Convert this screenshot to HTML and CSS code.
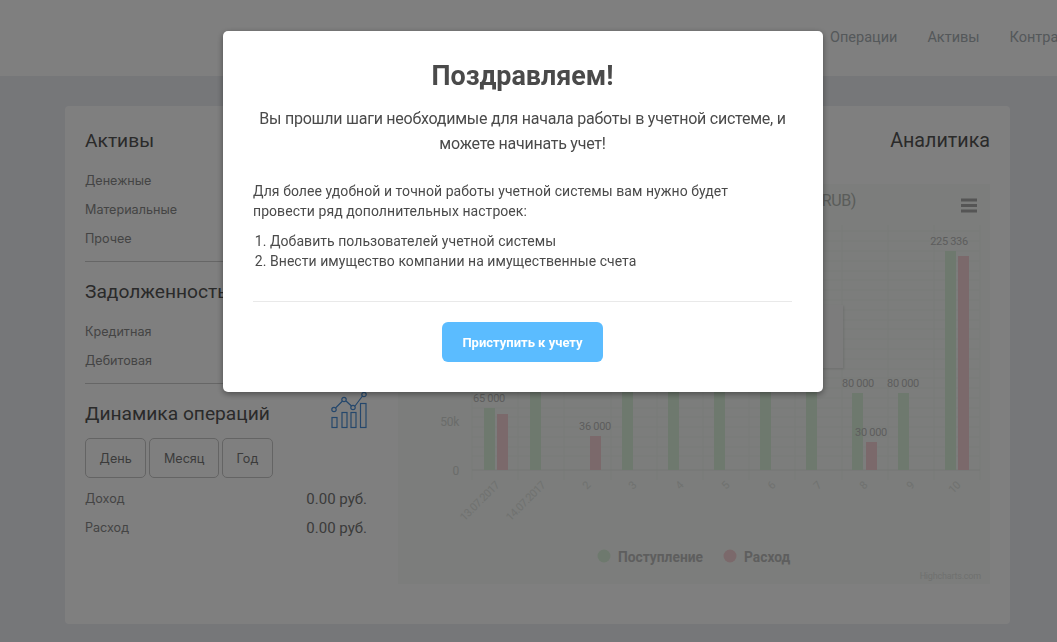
FILE: index.html
```html
<!DOCTYPE html>
<html lang="en">
<head>
  <meta charset="UTF-8" />
  <title>Учет</title>
  <link rel="stylesheet" href="styles.css">
</head>
<body>
  <header class="topbar">
    <nav class="nav">
      <a>Операции</a>
      <a>Активы</a>
      <a>Контра</a>
    </nav>
  </header>

  <main class="card">
    <section class="left">
      <h3>Активы</h3>
      <div class="row"><span>Денежные</span></div>
      <div class="row"><span>Материальные</span></div>
      <div class="row"><span>Прочее</span></div>
      <hr>
      <h3>Задолженность</h3>
      <div class="row"><span>Кредитная</span></div>
      <div class="row"><span>Дебитовая</span></div>
      <hr>
      <div class="dyn-head">
        <h3>Динамика операций</h3>
        <svg class="dyn-icon" width="38" height="38" viewBox="0 0 38 38" fill="none" stroke="#4a8fd8" stroke-width="1.2">
          <rect x="3" y="26.500" width="5" height="10"/>
          <rect x="13" y="21.500" width="5" height="15"/>
          <rect x="22" y="21.500" width="5" height="15"/>
          <rect x="31.500" y="12.500" width="5.500" height="24"/>
          <path d="M6.500 17 L13.500 10 M17 10 L22.500 15 M26 15 L33.500 5"/>
          <circle cx="5" cy="18.500" r="2.200"/>
          <circle cx="15" cy="8.500" r="2.200"/>
          <circle cx="24" cy="16.500" r="2.200"/>
          <circle cx="35" cy="3.500" r="2.200"/>
        </svg>
      </div>
      <div class="periods">
        <button>День</button>
        <button>Месяц</button>
        <button>Год</button>
      </div>
      <div class="row"><span>Доход</span><b>0.00 руб.</b></div>
      <div class="row"><span>Расход</span><b>0.00 руб.</b></div>
    </section>

    <section class="right">
      <h3>Аналитика</h3>
      <div class="chart">
        <svg width="592" height="400" viewBox="398 184 592 400">
          <path class="grid" d="M472 231H980M472 241H980M472 251H980M472 261H980M472 271H980M472 280H980M472 290H980M472 300H980M472 310H980M472 320H980M472 329H980M472 339H980M472 349H980M472 359H980M472 369H980M472 378H980M472 388H980M472 398H980M472 408H980M472 417H980M472 427H980M472 437H980M472 447H980M472 456H980"/>
          <path class="grid" d="M472 225V480M518 225V480M564 225V480M611 225V480M657 225V480M703 225V480M749 225V480M795 225V480M842 225V480M888 225V480M934 225V480M980 225V480"/>
          <path class="axis" d="M472 470H980"/>

          <rect class="in" x="484" y="408" width="11" height="62"/>
          <rect class="out" x="497" y="414" width="11" height="56"/>
          <rect class="in" x="530" y="380" width="11" height="90"/>
          <rect class="out" x="590" y="436" width="11" height="34"/>
          <rect class="in" x="622" y="380" width="11" height="90"/>
          <rect class="in" x="668" y="380" width="11" height="90"/>
          <rect class="in" x="714" y="380" width="11" height="90"/>
          <rect class="in" x="760" y="380" width="11" height="90"/>
          <rect class="in" x="806" y="380" width="11" height="90"/>
          <rect class="in" x="852" y="393" width="11" height="77"/>
          <rect class="out" x="866" y="442" width="11" height="28"/>
          <rect class="in" x="898" y="393" width="11" height="77"/>
          <rect class="in" x="945" y="251" width="11" height="219"/>
          <rect class="out" x="958" y="256" width="11" height="214"/>

          <rect class="tip" x="780" y="305" width="63" height="63"/>

          <text class="title" x="856" y="206" text-anchor="end">(RUB)</text>
          <path class="burger" d="M961 200H977M961 205.500H977M961 211H977"/>

          <g class="val" text-anchor="middle">
            <text x="489" y="402">65 000</text>
            <text x="595" y="430">36 000</text>
            <text x="858" y="387">80 000</text>
            <text x="871" y="436">30 000</text>
            <text x="903" y="387">80 000</text>
            <text x="949" y="245">225 336</text>
          </g>
          <g class="ylab" text-anchor="end">
            <text x="459" y="426">50k</text>
            <text x="459" y="475">0</text>
          </g>
          <g class="xlab" text-anchor="end">
            <text transform="translate(500 486) rotate(-45)">13.07.2017</text>
            <text transform="translate(546 486) rotate(-45)">14.07.2017</text>
            <text transform="translate(591 486) rotate(-45)">2</text>
            <text transform="translate(637 486) rotate(-45)">3</text>
            <text transform="translate(684 486) rotate(-45)">4</text>
            <text transform="translate(730 486) rotate(-45)">5</text>
            <text transform="translate(776 486) rotate(-45)">6</text>
            <text transform="translate(822 486) rotate(-45)">7</text>
            <text transform="translate(868 486) rotate(-45)">8</text>
            <text transform="translate(915 486) rotate(-45)">9</text>
            <text transform="translate(961 486) rotate(-45)">10</text>
          </g>

          <circle class="in" cx="604" cy="556" r="6.500"/>
          <text class="legend" x="618" y="562">Поступление</text>
          <circle class="out" cx="730" cy="556" r="6.500"/>
          <text class="legend" x="744" y="562">Расход</text>
          <text class="credits" x="981" y="579" text-anchor="end">Highcharts.com</text>
        </svg>
      </div>
    </section>
  </main>

  <div class="overlay">
    <div class="modal">
      <h2>Поздравляем!</h2>
      <p class="lead">Вы прошли шаги необходимые для начала работы в учетной системе, и можете начинать учет!</p>
      <p class="note">Для более удобной и точной работы учетной системы вам нужно будет провести ряд дополнительных настроек:</p>
      <ol>
        <li>Добавить пользователей учетной системы</li>
        <li>Внести имущество компании на имущественные счета</li>
      </ol>
      <div class="modal-foot">
        <button class="start">Приступить к учету</button>
      </div>
    </div>
  </div>
</body>
</html>
```

FILE: styles.css
```css
* {
  box-sizing: border-box;
  margin: 0;
  padding: 0;
}

html, body {
  height: 100%;
  overflow: hidden;
}

body {
  font-family: 'Roboto', sans-serif;
  font-size: 14px;
  background-color: #eceef2;
  color: #666;
}

.topbar {
  height: 76px;
  background: white;
  display: flex;
  align-items: center;
  padding-bottom: 1px;
}

.nav {
  display: flex;
  gap: 30px;
  margin-left: 830px;
  white-space: nowrap;
  font-size: 14.5px;
  color: #a9b0b5;
}

.card {
  display: flex;
  justify-content: space-between;
  width: 945px;
  height: 518px;
  margin: 30px 0 0 65px;
  padding: 20px;
  background: white;
  border-radius: 4px;
}

h3 {
  font-size: 19.2px;
  font-weight: 400;
  line-height: 28px;
  padding-top: 1px;
  color: #555;
}

.left {
  width: 282px;
}

.left > h3 {
  height: 28px;
  margin-bottom: 12px;
}

.row {
  display: flex;
  justify-content: space-between;
  align-items: center;
  height: 29px;
  font-family: 'Inter', sans-serif;
  font-size: 12.6px;
  color: #888;
}

.row b {
  font-family: 'Roboto', sans-serif;
  font-size: 15px;
  font-weight: 400;
  color: #777;
}

hr {
  border: none;
  border-top: 1px solid #ccc;
  margin: 8px 0 15px;
}

.dyn-head {
  display: flex;
  justify-content: space-between;
  align-items: flex-start;
  height: 39px;
}

.dyn-head h3 {
  padding-top: 1px;
}

.dyn-icon {
  margin-top: -8px;
}

.periods {
  display: flex;
  gap: 3px;
  margin-bottom: 6px;
}

.periods button {
  height: 40px;
  padding: 0 13.6px;
  font-family: 'Inter', sans-serif;
  font-size: 12.6px;
  color: #777;
  background: #fff;
  border: 1px solid #c8c8c8;
  border-radius: 5px;
}

.right {
  width: 592px;
  text-align: right;
}

.right > h3 {
  height: 28px;
  margin-bottom: 30px;
  font-size: 19.7px;
}

.chart {
  width: 592px;
  height: 400px;
  background: #f8fbf8;
}

.chart text {
  font-family: 'Roboto', sans-serif;
}

.grid {
  fill: none;
  stroke: #f2f5f2;
  stroke-width: 1;
}

.axis {
  fill: none;
  stroke: #e9ece9;
}

.in {
  fill: #dcf2dc;
}

.out {
  fill: #f7d2d6;
}

.tip {
  fill: #f8f8f8;
  filter: drop-shadow(1px 1px 1px rgba(0, 0, 0, 0.1));
}

.burger {
  fill: none;
  stroke: #aaa;
  stroke-width: 3;
}

.chart .title {
  font-size: 16px;
  letter-spacing: -0.4px;
  fill: #b4b8b4;
}

.val {
  font-size: 11px;
  letter-spacing: -0.3px;
  fill: #bbb;
}

.ylab {
  font-size: 12px;
  letter-spacing: -0.3px;
  fill: #d5d8d5;
}

.xlab {
  font-size: 11px;
  letter-spacing: -0.5px;
  fill: #e0e3e0;
}

.chart .legend {
  font-size: 13.8px;
  font-weight: 700;
  fill: #bdbdbd;
}

.credits {
  font-size: 9px;
  letter-spacing: -0.2px;
  fill: #dfe2df;
}

.overlay {
  position: fixed;
  inset: 0;
  background: rgba(0, 0, 0, 0.5);
}

.modal {
  position: absolute;
  top: 31px;
  left: 223px;
  width: 600px;
  height: 361px;
  padding: 30px 31px 30px 30px;
  background: white;
  border-radius: 5px;
  box-shadow: 0 2px 6px rgba(0, 0, 0, 0.4);
  color: #4a4a4a;
}

.modal h2 {
  font-size: 26.900px;
  font-weight: 700;
  line-height: 30px;
  text-align: center;
  margin-bottom: 15px;
}

.lead {
  font-size: 16px;
  letter-spacing: -0.24px;
  line-height: 25px;
  text-align: center;
  margin-bottom: 25px;
}

.note {
  font-size: 14px;
  letter-spacing: 0.06px;
  line-height: 20px;
  width: 500px;
  margin-bottom: 10px;
}

ol {
  font-size: 14px;
  letter-spacing: 0.05px;
  line-height: 20px;
  padding-left: 17px;
}

.modal-foot {
  margin-top: 30px;
  padding-top: 20px;
  border-top: 1px solid #e9e9e9;
  text-align: center;
}

.start {
  width: 161px;
  height: 40px;
  font-family: 'Roboto', sans-serif;
  font-size: 13px;
  font-weight: 700;
  color: white;
  background-color: #5bbcff;
  border: none;
  border-radius: 6px;
}
```
